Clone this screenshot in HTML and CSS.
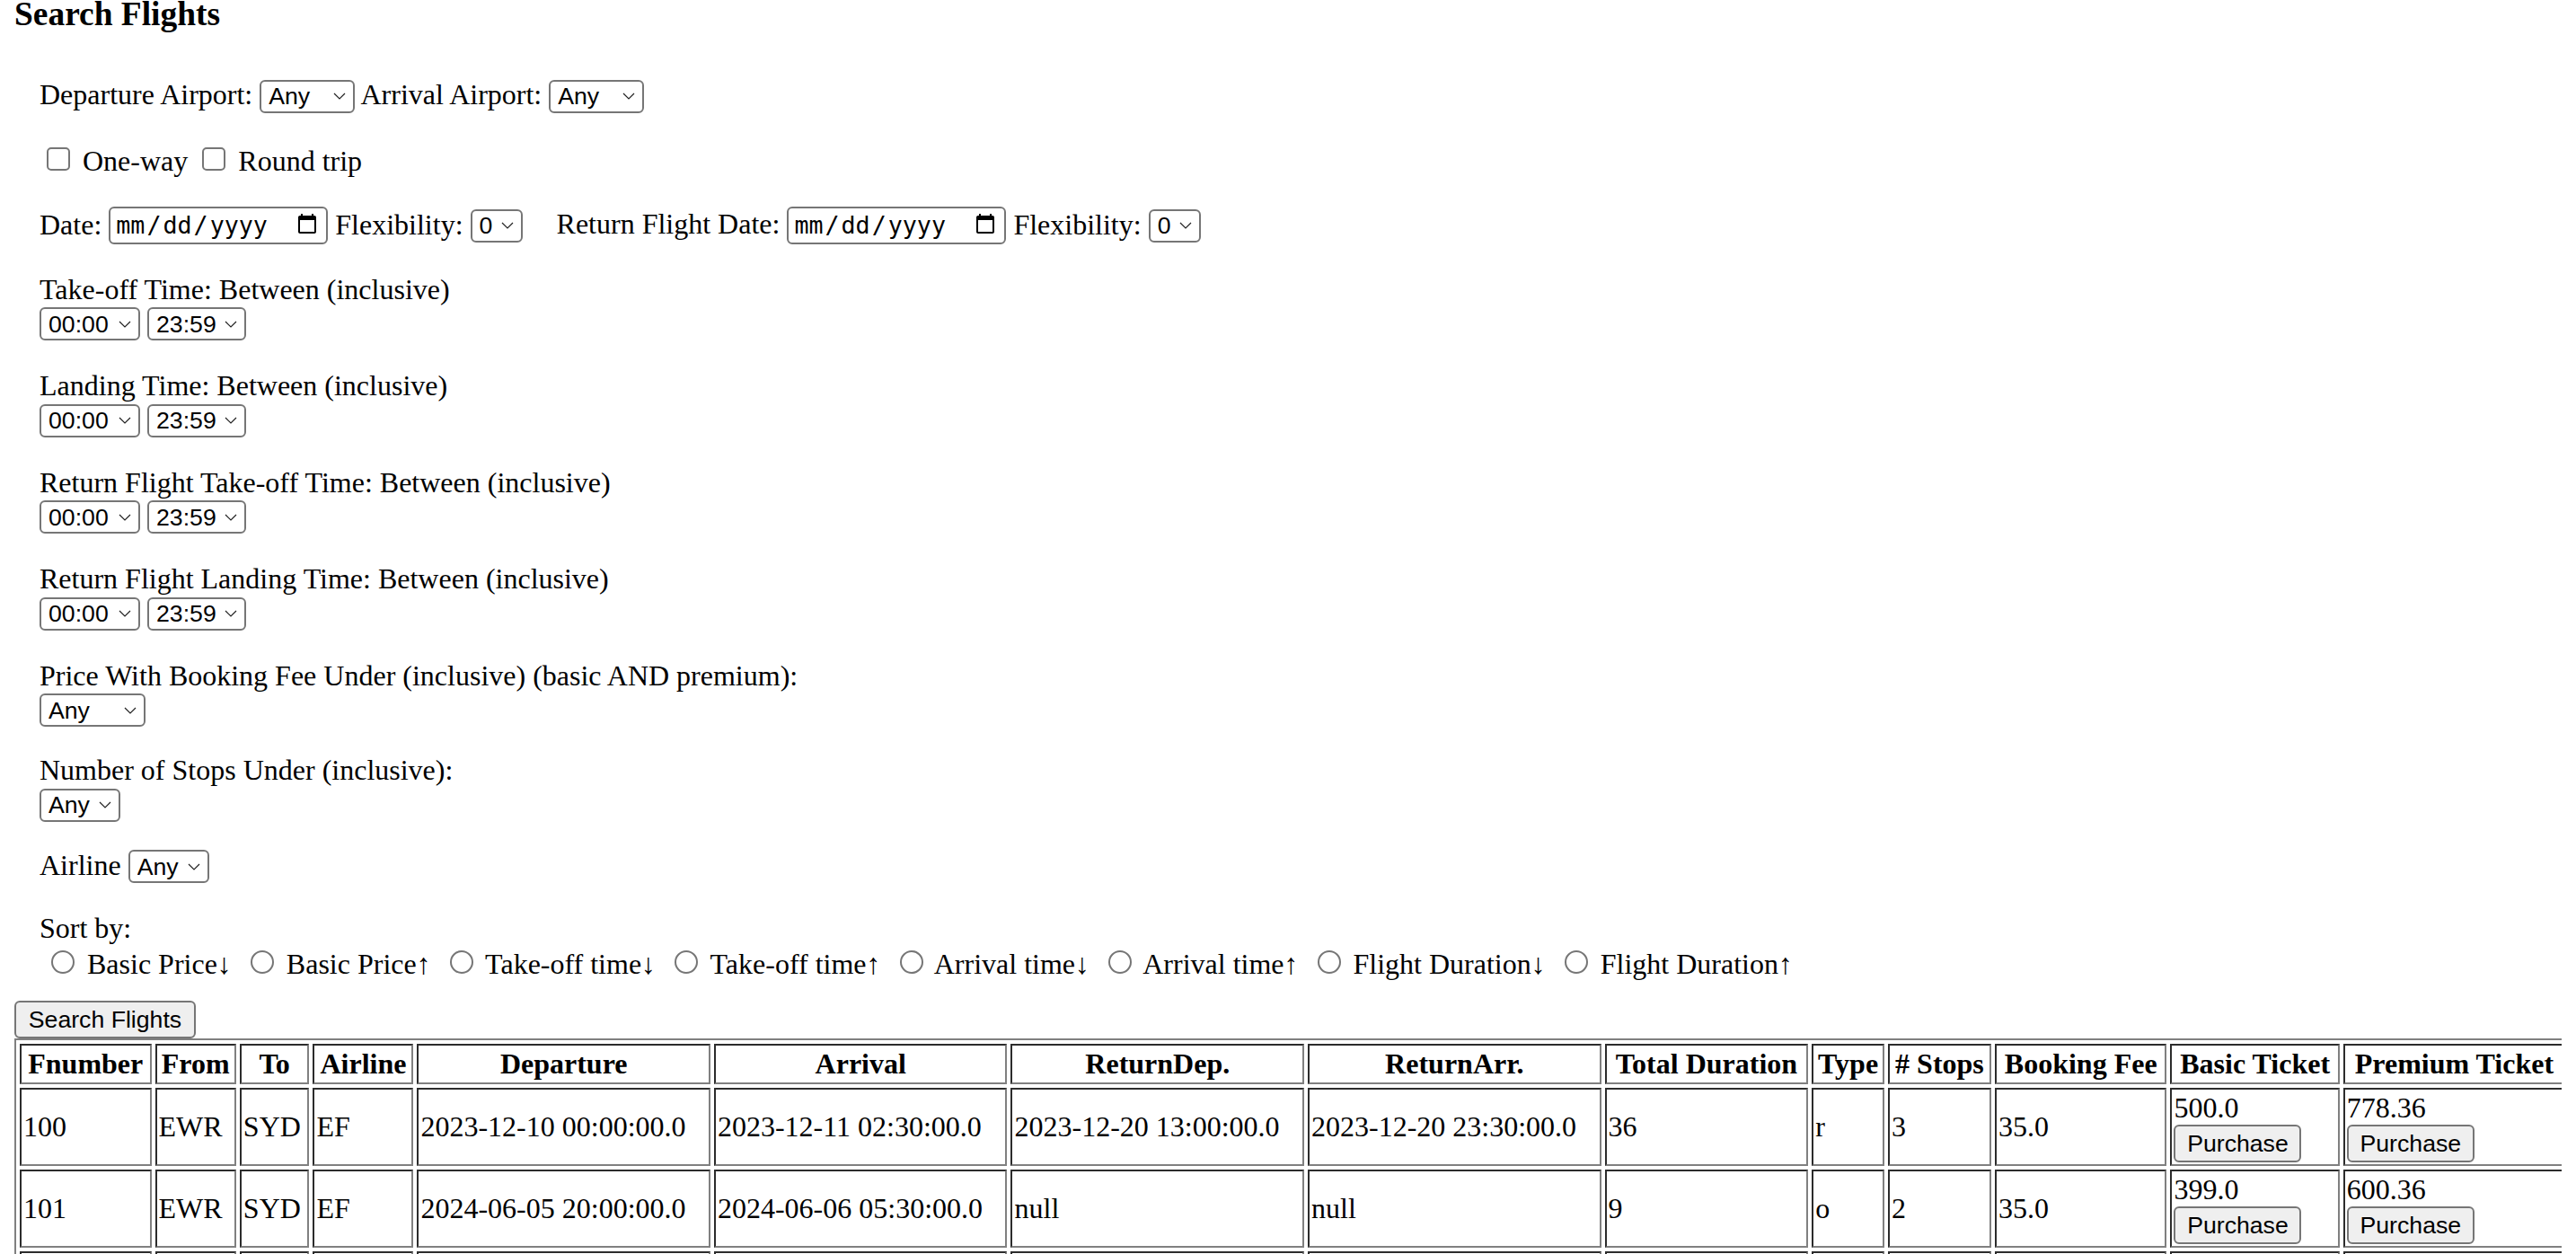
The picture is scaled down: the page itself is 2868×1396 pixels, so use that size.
FILE: index.html
```html
<!DOCTYPE html>
<html lang="en">
<head>
<meta charset="utf-8">
<title>Search Flights</title>
<link rel="stylesheet" href="styles.css">
</head>
<body>
<h3 class="title">Search Flights</h3>
<form class="search">
  <p class="row">Departure Airport: <select class="sel sel-airport"><option>Any</option><option>EWR</option><option>SYD</option></select> Arrival Airport: <select class="sel sel-airport"><option>Any</option><option>EWR</option><option>SYD</option></select></p>
  <p class="row"><input type="checkbox" class="chk"> One-way <input type="checkbox" class="chk"> Round trip</p>
  <p class="row">Date: <input type="date" class="date"> Flexibility: <select class="sel sel-flex"><option>0</option><option>1</option><option>2</option><option>3</option></select><span class="gap">Return Flight Date:</span> <input type="date" class="date"> Flexibility: <select class="sel sel-flex"><option>0</option><option>1</option><option>2</option><option>3</option></select></p>
  <p class="row">Take-off Time: Between (inclusive)<br><select class="sel sel-time"><option>00:00</option></select> <select class="sel sel-time2"><option>23:59</option></select></p>
  <p class="row">Landing Time: Between (inclusive)<br><select class="sel sel-time"><option>00:00</option></select> <select class="sel sel-time2"><option>23:59</option></select></p>
  <p class="row">Return Flight Take-off Time: Between (inclusive)<br><select class="sel sel-time"><option>00:00</option></select> <select class="sel sel-time2"><option>23:59</option></select></p>
  <p class="row">Return Flight Landing Time: Between (inclusive)<br><select class="sel sel-time"><option>00:00</option></select> <select class="sel sel-time2"><option>23:59</option></select></p>
  <p class="row row-tight">Price With Booking Fee Under (inclusive) (basic AND premium):<br><select class="sel sel-price"><option>Any</option></select></p>
  <p class="row row-tight">Number of Stops Under (inclusive):<br><select class="sel sel-small"><option>Any</option></select></p>
  <p class="row">Airline <select class="sel sel-small"><option>Any</option></select></p>
  <p class="row row-last">Sort by:<br><input type="radio" name="sort" class="rad"> Basic Price↓ <input type="radio" name="sort" class="rad"> Basic Price↑ <input type="radio" name="sort" class="rad"> Take-off time↓ <input type="radio" name="sort" class="rad"> Take-off time↑ <input type="radio" name="sort" class="rad"> Arrival time↓ <input type="radio" name="sort" class="rad"> Arrival time↑ <input type="radio" name="sort" class="rad"> Flight Duration↓ <input type="radio" name="sort" class="rad"> Flight Duration↑</p>
</form>
<div class="actions"><button class="btn">Search Flights</button></div>
<table class="results">
  <tr>
    <th>Fnumber</th><th>From</th><th>To</th><th>Airline</th><th>Departure</th><th>Arrival</th><th>ReturnDep.</th><th>ReturnArr.</th><th>Total Duration</th><th>Type</th><th># Stops</th><th>Booking Fee</th><th>Basic Ticket</th><th>Premium Ticket</th>
  </tr>
  <tr>
    <td>100</td><td>EWR</td><td>SYD</td><td>EF</td><td>2023-12-10 00:00:00.0</td><td>2023-12-11 02:30:00.0</td><td>2023-12-20 13:00:00.0</td><td>2023-12-20 23:30:00.0</td><td>36</td><td>r</td><td>3</td><td>35.0</td>
    <td>500.0<br><button class="btn">Purchase</button></td><td>778.36<br><button class="btn">Purchase</button></td>
  </tr>
  <tr>
    <td>101</td><td>EWR</td><td>SYD</td><td>EF</td><td>2024-06-05 20:00:00.0</td><td>2024-06-06 05:30:00.0</td><td>null</td><td>null</td><td>9</td><td>o</td><td>2</td><td>35.0</td>
    <td>399.0<br><button class="btn">Purchase</button></td><td>600.36<br><button class="btn">Purchase</button></td>
  </tr>
  <tr>
    <td>102</td><td>EWR</td><td>SYD</td><td>EF</td><td>2024-06-05 20:00:00.0</td><td>2024-06-06 05:30:00.0</td><td>null</td><td>null</td><td>9</td><td>o</td><td>2</td><td>35.0</td>
    <td>399.0<br><button class="btn">Purchase</button></td><td>600.36<br><button class="btn">Purchase</button></td>
  </tr>
</table>
</body>
</html>
```
FILE: styles.css
```css
html {
  zoom: 2;
}
body {
  margin: 0 8px 8px 8px;
  font-family: "Liberation Serif", "Times New Roman", serif;
  font-size: 16px;
  color: #000;
  background: #fff;
}
.title {
  font-size: 18.72px;
  font-weight: bold;
  margin: -3px 0 25px 0;
}
.search {
  margin: 0;
  padding-left: 14px;
}
.row {
  margin: 16px 0;
}
.row-tight {
  margin: 15px 0;
}
.row-tight + .row {
  margin-top: 15px;
}
.row-last {
  margin-bottom: 11px;
}
.gap {
  margin-left: 19px;
}
.sel {
  -webkit-appearance: none;
  appearance: none;
  font-family: "Liberation Sans", Arial, sans-serif;
  font-size: 13.33px;
  height: 18.5px;
  color: #000;
  background-color: #fff;
  background-image: url("data:image/svg+xml;utf8,<svg xmlns='http://www.w3.org/2000/svg' width='14' height='8' viewBox='0 0 14 8'><path d='M1 1 L7 7 L13 1' fill='none' stroke='%23222' stroke-width='1.2'/></svg>");
  background-repeat: no-repeat;
  background-size: 7px 4px;
  background-position: right 4px center;
  border: 1px solid #767676;
  border-radius: 3px;
  padding: 0 12px 0 4px;
  box-sizing: border-box;
  vertical-align: baseline;
}
.sel-airport { width: 53px; }
.sel-flex { width: 29px; }
.sel-time { width: 56px; }
.sel-time2 { width: 55px; }
.sel-price { width: 59px; }
.sel-small { width: 45px; }
.rad {
  margin: 3px 3px 0 6.5px;
}
.date {
  font-family: "DejaVu Sans Mono", "Liberation Mono", monospace;
  font-size: 13.33px;
  width: 122px;
  height: 21px;
  box-sizing: border-box;
  border: 1px solid #767676;
  border-radius: 3px;
  padding: 0 2px;
}
.btn {
  font-family: "Liberation Sans", Arial, sans-serif;
  font-size: 13.33px;
  color: #000;
  background: #efefef;
  border: 1px solid #767676;
  border-radius: 3px;
  padding: 1px 6px;
  height: 21px;
}
.actions .btn {
  width: 101px;
}
.results {
  width: 1423px;
  border: 1px outset grey;
  border-spacing: 2px;
  border-collapse: separate;
}
.results th,
.results td {
  border: 1px inset grey;
  padding: 1px;
}
.results td .btn {
  width: 71px;
}
```
